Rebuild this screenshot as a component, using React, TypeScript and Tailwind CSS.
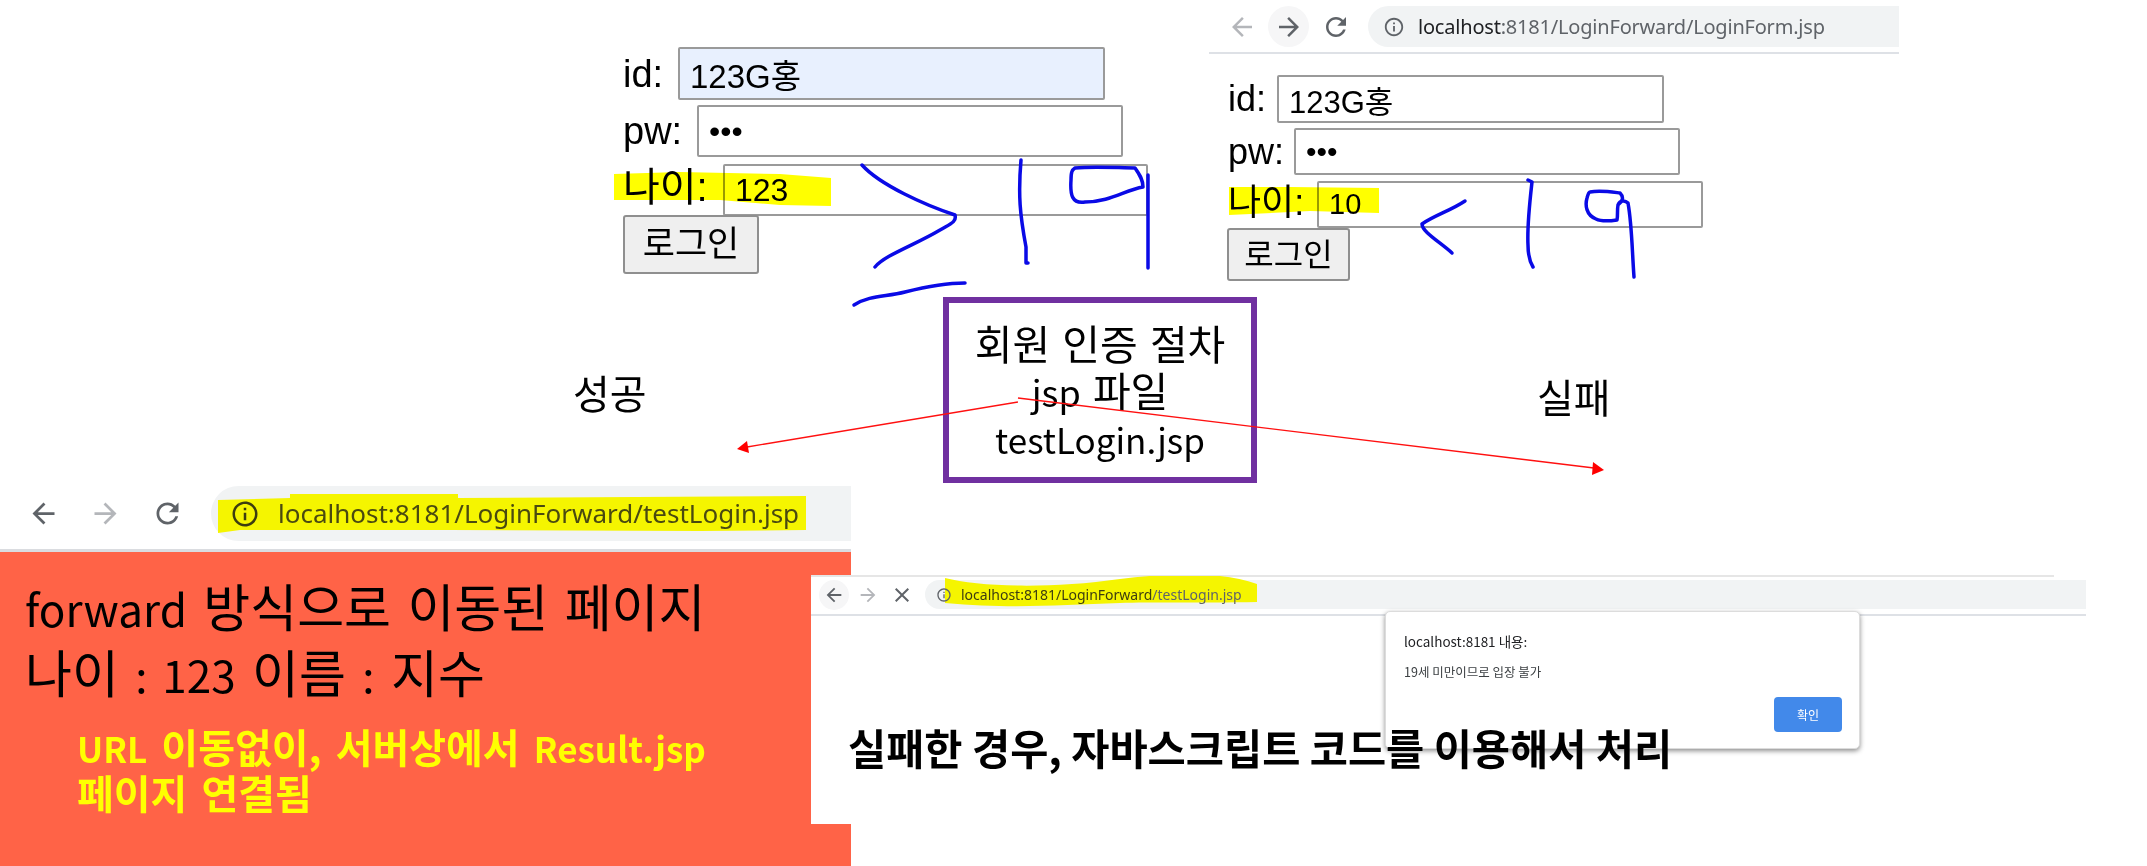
import React from "react";

const BACK = "M20 11H7.83l5.59-5.59L12 4l-8 8 8 8 1.41-1.41L7.83 13H20v-2z";
const FORWARD = "M4 11h12.17l-5.59-5.59L12 4l8 8-8 8-1.41-1.41L16.17 13H4v-2z";
const RELOAD = "M17.65 6.35C16.2 4.9 14.21 4 12 4c-4.42 0-7.99 3.58-7.99 8s3.57 8 7.99 8c3.73 0 6.84-2.55 7.73-6h-2.08c-.82 2.33-3.04 4-5.65 4-3.31 0-6-2.69-6-6s2.69-6 6-6c1.66 0 3.14.69 4.22 1.78L13 11h7V4l-2.35 2.35z";
const CLOSE = "M19 6.41L17.59 5 12 10.59 6.41 5 5 6.41 10.59 12 5 17.59 6.41 19 12 13.41 17.59 19 19 17.59 13.41 12z";
const INFO = "M11 7h2v2h-2zm0 4h2v6h-2zm1-9C6.48 2 2 6.48 2 12s4.48 10 10 10 10-4.48 10-10S17.52 2 12 2zm0 18c-4.41 0-8-3.59-8-8s3.59-8 8-8 8 3.59 8 8-3.59 8-8 8z";

function Glyph({ d, className }: { d: string; className: string }) {
  return (
    <svg viewBox="0 0 24 24" className={`shrink-0 ${className}`} fill="currentColor">
      <path d={d} />
    </svg>
  );
}

const sans = "font-['Liberation_Sans','Noto_Sans_CJK_KR',sans-serif]";
const kr = "font-['Noto_Sans_CJK_KR',sans-serif]";
const url = "font-['Noto_Sans','Noto_Sans_CJK_KR',sans-serif]";
const field = "shrink-0 border-2 border-[#9a9a9a] rounded-[2px] text-black outline-none px-[10px] " + sans;
const btn = "bg-[#efefef] border-2 border-[#8f8f8f] rounded-[3px] text-black flex items-center justify-center " + sans;
const ink = { fill: "none", stroke: "#0a0ae6", strokeWidth: 3.5, strokeLinecap: "round" as const, strokeLinejoin: "round" as const };

function Row({ label, labelW, text, children, className }: { label: string; labelW: string; text: string; children: React.ReactNode; className: string }) {
  return (
    <div className={`flex items-center ${className}`}>
      <div className={`shrink-0 leading-none text-black whitespace-nowrap ${labelW} ${text} ${sans}`}>{label}</div>
      {children}
    </div>
  );
}

export default function App() {
  return (
    <div className="relative w-[2147px] h-[866px] overflow-hidden bg-white">
      {/* left login form */}
      <div className="absolute left-[623px] top-[47px] flex flex-col items-start">
        <Row label="id:" labelW="w-[55px]" text="text-[38px]" className="h-[53px]">
          <input readOnly value="123G홍" className={`${field} w-[427px] h-[53px] text-[33px] bg-[#e8f0fe]`} />
        </Row>
        <Row label="pw:" labelW="w-[74px]" text="text-[38px]" className="h-[52px] mt-[5px]">
          <input readOnly type="password" value="123" className={`${field} w-[426px] h-[52px] text-[32px] bg-white`} />
        </Row>
        <Row label="나이:" labelW="w-[100px]" text="text-[40px] pb-[6px]" className="h-[52px] mt-[7px]">
          <input readOnly value="123" className={`${field} w-[425px] h-[52px] text-[32px] bg-transparent`} />
        </Row>
        <div className={`${btn} w-[136px] h-[59px] text-[35px] -mt-[1px]`}>로그인</div>
      </div>

      {/* right browser bar */}
      <div className="absolute left-[1209px] top-0 w-[690px] h-[54px] border-b-2 border-[#dee1e6] bg-white flex items-start pt-[6px] pl-[12px]">
        <div className="flex gap-[6px] items-center h-[41px]">
          <div className="w-[41px] h-[41px] flex items-center justify-center text-[#b4b6ba]"><Glyph d={BACK} className="w-[30px] h-[30px]" /></div>
          <div className="w-[41px] h-[41px] flex items-center justify-center rounded-full bg-[#f6f6f7] text-[#5f6368]"><Glyph d={FORWARD} className="w-[30px] h-[30px]" /></div>
          <div className="w-[41px] h-[41px] flex items-center justify-center text-[#5f6368]"><Glyph d={RELOAD} className="w-[30px] h-[30px]" /></div>
        </div>
        <div className={`ml-[12px] flex-1 h-[41px] rounded-l-full bg-[#f1f3f4] flex items-center pl-[15px] gap-[13px] text-[#5f6368] whitespace-nowrap text-[20px] tracking-[-0.2px] ${url}`}>
          <Glyph d={INFO} className="w-[22px] h-[22px]" />
          <div><span className="text-[#202124]">localhost</span>:8181/LoginForward/LoginForm.jsp</div>
        </div>
      </div>

      {/* right login form */}
      <div className="absolute left-[1228px] top-[75px] flex flex-col items-start">
        <Row label="id:" labelW="w-[49px]" text="text-[36px]" className="h-[48px]">
          <input readOnly value="123G홍" className={`${field} w-[387px] h-[48px] text-[31px] bg-white`} />
        </Row>
        <Row label="pw:" labelW="w-[66px]" text="text-[36px]" className="h-[47px] mt-[5px]">
          <input readOnly type="password" value="123" className={`${field} w-[386px] h-[47px] text-[30px] bg-white`} />
        </Row>
        <Row label="나이:" labelW="w-[89px]" text="text-[36px] pb-[4px]" className="h-[47px] mt-[6px]">
          <input readOnly value="10" className={`${field} w-[386px] h-[47px] text-[29px] bg-transparent`} />
        </Row>
        <div className={`${btn} w-[123px] h-[53px] text-[32px] -ml-[1px]`}>로그인</div>
      </div>

      {/* centre box and labels */}
      <div className={`absolute left-[943px] top-[297px] w-[314px] h-[186px] border-[6px] border-[#7030a0] flex flex-col items-center justify-center text-[41px] leading-[47px] text-black bg-white [word-spacing:3px] ${kr}`}>
        <div>회원 인증 절차</div>
        <div><span className="text-[36px]">jsp</span> 파일</div>
        <div className="text-[35px]">testLogin.jsp</div>
      </div>
      <div className={`absolute left-[573px] top-[366px] text-[40px] leading-[52px] text-black ${kr}`}>성공</div>
      <div className={`absolute left-[1537px] top-[370px] text-[40px] leading-[52px] text-black ${kr}`}>실패</div>

      {/* left result page */}
      <div className="absolute left-0 top-[486px] w-[851px] h-[380px] flex flex-col bg-white">
        <div className="h-[63px] shrink-0 flex items-start">
          <div className="h-[55px] pl-[27px] flex items-center gap-[29px]">
            <Glyph d={BACK} className="w-[33px] h-[33px] text-[#5f6368]" />
            <Glyph d={FORWARD} className="w-[33px] h-[33px] text-[#b4b6ba]" />
            <Glyph d={RELOAD} className="w-[33px] h-[33px] text-[#5f6368]" />
          </div>
          <div className="relative ml-[27px] flex-1 h-[55px] rounded-l-full bg-[#f1f3f4] flex items-center pl-[19px] gap-[18px]">
            <svg className="absolute left-0 top-0 w-[640px] h-[55px]" viewBox="0 0 640 55">
              <path d="M7 14 L79 12 L79 8 L247 8 L247 12 L595 10 L595 44 L489 45 L239 44 L29 44 L7 47 Z" fill="#f5f500" />
            </svg>
            <Glyph d={INFO} className="relative w-[30px] h-[30px] text-[#3d3d10]" />
            <div className={`relative text-[26px] whitespace-nowrap text-[#4a4a10] ${url}`}>localhost:8181/LoginForward/testLogin.jsp</div>
          </div>
        </div>
        <div className="h-[3px] shrink-0 bg-[#dadce0]" />
        <div className={`flex-1 bg-[#ff6347] pl-[25px] pt-[22px] ${kr}`}>
          <div className="text-[51px] leading-[63px] text-black whitespace-nowrap [word-spacing:5px]">
            <div><span className="text-[44px]">forward</span> 방식으로 이동된 페이지</div>
            <div>나이 <span className="text-[44px]">: 123</span> 이름 <span className="text-[44px]">:</span> 지수</div>
          </div>
          <div className="mt-[18px] ml-[52px] text-[40px] leading-[45px] font-bold text-[#ffff00] whitespace-nowrap [word-spacing:5px]">
            <div><span className="text-[35px]">URL</span> 이동없이, 서버상에서 <span className="text-[35px]">Result.jsp</span></div>
            <div>페이지 연결됨</div>
          </div>
        </div>
      </div>

      {/* failure browser */}
      <div className="absolute left-[811px] top-[575px] w-[1275px] h-[249px] flex flex-col bg-white">
        <div className="w-[1243px] h-[2px] shrink-0 bg-[#e6e6e6]" />
        <div className="h-[37px] shrink-0 flex items-start pt-[3px] pl-[8px]">
          <div className="flex items-center gap-[4px] h-[29px]">
            <div className="w-[30px] h-[30px] rounded-full bg-[#f6f6f7] flex items-center justify-center text-[#5f6368]"><Glyph d={BACK} className="w-[22px] h-[22px]" /></div>
            <div className="w-[30px] h-[30px] flex items-center justify-center text-[#b4b6ba]"><Glyph d={FORWARD} className="w-[22px] h-[22px]" /></div>
            <div className="w-[30px] h-[30px] flex items-center justify-center text-[#5f6368]"><Glyph d={CLOSE} className="w-[24px] h-[24px]" /></div>
          </div>
          <div className={`relative ml-[8px] flex-1 h-[29px] rounded-l-full bg-[#f1f3f4] flex items-center pl-[11px] gap-[9px] text-[14px] whitespace-nowrap text-[#5f6368] ${url}`}>
            <svg className="absolute left-0 top-[-4px] w-[340px] h-[36px]" viewBox="0 0 340 36">
              <path d="M20 2 C55 11 125 13 195 3 C245 -3 295 -5 332 8 L332 26 C275 27 225 26 195 27 C135 29 85 33 20 27 Z" fill="#f5f500" />
            </svg>
            <Glyph d={INFO} className="relative w-[16px] h-[16px]" />
            <div className="relative"><span className="text-[#3d3d10]">localhost:8181/LoginForward</span>/testLogin.jsp</div>
          </div>
        </div>
        <div className="h-[2px] shrink-0 bg-[#dee1e6]" />
        <div className={`relative z-10 pl-[37px] pt-[102px] text-[41.5px] leading-[58px] font-bold text-black whitespace-nowrap ${kr}`}>실패한 경우, 자바스크립트 코드를 이용해서 처리</div>

        {/* alert dialog */}
        <div className={`absolute left-[574px] top-[36px] w-[475px] h-[138px] rounded-[5px] bg-white border border-[#dcdcdc] shadow-[0_2px_5px_rgba(0,0,0,0.45)] flex flex-col pt-[18px] pl-[18px] pr-[17px] ${kr}`}>
          <div className="text-[13.5px] leading-[22px] text-[#202124] whitespace-nowrap">localhost:8181 내용:</div>
          <div className="mt-[10px] text-[12.5px] leading-[20px] text-[#3c4043] whitespace-nowrap">19세 미만이므로 입장 불가</div>
          <div className="mt-[15px] self-end w-[68px] h-[35px] rounded-[4px] bg-[#4289ea] text-white text-[12px] flex items-center justify-center">확인</div>
        </div>
      </div>

      {/* hand drawn marks and arrows */}
      <svg className="absolute left-0 top-0 w-[2147px] h-[866px] pointer-events-none" viewBox="0 0 2147 866">
        <g style={{ mixBlendMode: "multiply" }}>
          <path d="M614 174 L680 172 L780 174 L831 178 L831 206 L780 205 L720 200 L614 200 Z" fill="#ffff00" />
          <path d="M1229 187 L1290 187 L1379 188 L1379 213 L1310 211 L1229 215 Z" fill="#ffff00" />
        </g>
        <path {...ink} d="M862 165 C880 185 925 205 955 215 C957 222 950 224 940 230 C915 245 885 255 875 267" />
        <path {...ink} d="M1021 160 C1018 195 1020 215 1026 247 L1026 263 L1028 263" />
        <path {...ink} d="M1075 168 C1095 166 1120 168 1135 168 C1140 175 1143 180 1143 187 C1125 190 1110 202 1085 202 C1072 204 1070 195 1071 180 C1071 172 1072 170 1075 168 Z M1148 175 L1148 268" />
        <path {...ink} d="M854 305 C870 295 886 297 905 292 C925 287 945 283 965 283" />
        <path {...ink} d="M1465 201 C1450 211 1435 215 1422 224 C1422 232 1440 242 1452 253" />
        <path {...ink} d="M1528 180 L1532 182 C1530 200 1527 225 1528 245 C1528 255 1530 262 1533 267" />
        <path {...ink} d="M1590 192 C1600 190 1612 192 1620 193 C1624 197 1623 201 1618 205 C1617 210 1618 215 1617 220 C1610 221 1600 221 1596 219 C1586 215 1585 205 1587 198 C1588 194 1589 192 1590 192 Z M1618 205 C1620 200 1625 200 1628 203 C1632 225 1632 250 1634 277" />

        <line x1="1018" y1="402" x2="747" y2="447" stroke="#ff1010" strokeWidth="1.3" />
        <polygon points="737,449 747,441 749,453" fill="#ff0000" />
        <line x1="1018" y1="398" x2="1594" y2="468" stroke="#ff1010" strokeWidth="1.3" />
        <polygon points="1604,470 1593,462 1592,475" fill="#ff0000" />
      </svg>
    </div>
  );
}
